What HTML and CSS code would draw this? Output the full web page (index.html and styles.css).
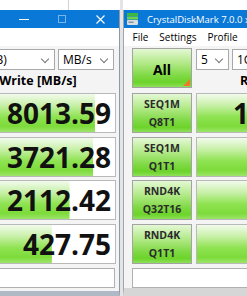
FILE: index.html
```html
<!DOCTYPE html>
<html lang="en">
<head>
    <meta charset="UTF-8">
    <meta name="viewport" content="width=device-width, initial-scale=1.0">
    <title>CrystalDiskMark</title>
    <link rel="stylesheet" href="styles.css">
</head>
<body>
    <div class="desk">
        <!-- left window, mostly off screen -->
        <div class="win win-left">
            <div class="titlebar">
                <span class="title">CrystalDiskMark 7.0.0 x64</span>
                <div class="caption">
                    <span class="cap-btn"><svg width="10" height="10" viewBox="0 0 10 10"><path d="M0 5.5h10" stroke="#fff" stroke-width="1"/></svg></span>
                    <span class="cap-btn dim"><svg width="8" height="8" viewBox="0 0 8 8"><rect x="0.5" y="0.5" width="7" height="7" fill="none" stroke="#fff" stroke-width="1"/></svg></span>
                    <span class="cap-btn"><svg width="9" height="9" viewBox="0 0 9 9"><path d="M0.5 0.5l8 8M8.5 0.5l-8 8" stroke="#fff" stroke-width="1.1"/></svg></span>
                </div>
            </div>
            <div class="menubar">
                <span>File</span><span>Settings</span><span>Profile</span><span>Theme</span><span>Help</span><span>Language</span>
            </div>
            <div class="panel">
                <div class="toprow">
                    <button class="test all">All</button>
                    <div class="ctrl">
                        <div class="selects">
                            <div class="select w-count">5</div>
                            <div class="select w-size">1GiB</div>
                            <div class="select w-drive">C: 2% (119/953GiB)</div>
                            <div class="select w-unit">MB/s</div>
                        </div>
                        <div class="heads"><span>Read [MB/s]</span><span>Write [MB/s]</span></div>
                    </div>
                </div>
                <div class="testrow">
                    <button class="test">SEQ1M<br>Q8T1</button>
                    <div class="meter" style="--fill: 95%">12547.36</div>
                    <div class="meter" style="--fill: 87%">8013.59</div>
                </div>
                <div class="testrow">
                    <button class="test">SEQ1M<br>Q1T1</button>
                    <div class="meter" style="--fill: 90%">7102.64</div>
                    <div class="meter" style="--fill: 86%">3721.28</div>
                </div>
                <div class="testrow">
                    <button class="test">RND4K<br>Q32T16</button>
                    <div class="meter" style="--fill: 72%">2390.17</div>
                    <div class="meter" style="--fill: 70.5%">2112.42</div>
                </div>
                <div class="testrow">
                    <button class="test">RND4K<br>Q1T1</button>
                    <div class="meter" style="--fill: 55%">78.92</div>
                    <div class="meter" style="--fill: 59%">427.75</div>
                </div>
                <div class="comment"></div>
            </div>
        </div>

        <div class="win-gap"></div>

        <!-- right window -->
        <div class="win win-right">
            <div class="titlebar">
                <svg class="app-icon" width="11" height="12" viewBox="0 0 11 12">
                    <rect x="0" y="0" width="11" height="3" fill="#3cb83c"/>
                    <rect x="0" y="3.5" width="11" height="3" fill="#6fd04a"/>
                    <rect x="0" y="7" width="11" height="5" rx="1" fill="#d8dde2"/>
                    <rect x="1.5" y="8.5" width="5" height="1.5" fill="#8a949c"/>
                </svg>
                <span class="title">CrystalDiskMark 7.0.0 x64 [Admin]</span>
            </div>
            <div class="menubar">
                <span>File</span><span>Settings</span><span>Profile</span><span>Theme</span><span>Help</span><span>Language</span>
            </div>
            <div class="panel">
                <div class="toprow">
                    <button class="test all">All</button>
                    <div class="ctrl">
                        <div class="selects">
                            <div class="select w-count">5</div>
                            <div class="select w-size">1GiB</div>
                            <div class="select w-drive">D: 0% (0/1863GiB)</div>
                            <div class="select w-unit">MB/s</div>
                        </div>
                        <div class="heads"><span>Read [MB/s]</span><span>Write [MB/s]</span></div>
                    </div>
                </div>
                <div class="testrow">
                    <button class="test">SEQ1M<br>Q8T1</button>
                    <div class="meter" style="--fill: 96%">14286.51</div>
                    <div class="meter" style="--fill: 88%">9437.02</div>
                </div>
                <div class="testrow">
                    <button class="test">SEQ1M<br>Q1T1</button>
                    <div class="meter" style="--fill: 88%">4685.47</div>
                    <div class="meter" style="--fill: 86%">6210.33</div>
                </div>
                <div class="testrow">
                    <button class="test">RND4K<br>Q32T16</button>
                    <div class="meter" style="--fill: 70%">1276.33</div>
                    <div class="meter" style="--fill: 69%">1189.60</div>
                </div>
                <div class="testrow">
                    <button class="test">RND4K<br>Q1T1</button>
                    <div class="meter" style="--fill: 50%">83.21</div>
                    <div class="meter" style="--fill: 55%">312.48</div>
                </div>
                <div class="comment"></div>
            </div>
        </div>
    </div>
</body>
</html>
```

FILE: styles.css
```css
html, body {
    margin: 0;
    padding: 0;
}
body {
    background: linear-gradient(#cfd3d6, #cfd3d6) no-repeat 68px 0 / 1px 10px, #fff;
    font-family: "Open Sans", "DejaVu Sans", sans-serif;
    color: #000;
    overflow: hidden;
    width: 247px;
    height: 296px;
}
.desk {
    display: flex;
    align-items: flex-start;
    height: 296px;
}
.win {
    flex: none;
    width: 392px;
    margin-top: 10px;
    height: 286px;
    background: #f4f4f4;
    display: flex;
    flex-direction: column;
    box-sizing: border-box;
}
.win-left {
    margin-left: -272px;
    border-right: 1px solid #8c99a6;
    border-bottom: 5px solid #aeb9c5;
}
.win-gap {
    flex: none;
    width: 3px;
    height: 296px;
    background: #e4e4e4;
}
.win-right {
    width: 400px;
    border-left: 1px solid #9da4ab;
    border-bottom: 8px solid #d6d6d6;
}

/* title bar */
.titlebar {
    height: 18px;
    background: #0a78d7;
    color: #fff;
    display: flex;
    align-items: center;
    flex: none;
}
.win-left .titlebar .title {
    visibility: hidden;
}
.title {
    font-size: 9.5px;
    white-space: nowrap;
    padding-left: 9px;
}
.app-icon {
    margin-left: 3px;
    flex: none;
}
.caption {
    display: flex;
    margin-left: auto;
    height: 18px;
}
.cap-btn {
    width: 38px;
    display: flex;
    align-items: center;
    justify-content: center;
}
.cap-btn.dim {
    opacity: 0.45;
}

/* menu */
.menubar {
    height: 18px;
    background: #fff;
    display: flex;
    align-items: center;
    font-size: 10px;
    padding-left: 3px;
    flex: none;
}
.win-left .menubar span {
    visibility: hidden;
}
.menubar span {
    padding: 0 5.5px;
}

/* main panel */
.panel {
    display: flex;
    flex-direction: column;
    padding: 2px 4px 0 8px;
    --read-col: 156px;
}
.win-right .panel {
    --read-col: 162px;
}
.toprow {
    display: grid;
    grid-template-columns: 60px 1fr;
    column-gap: 4px;
    height: 40px;
}
.ctrl {
    display: flex;
    flex-direction: column;
}
.selects {
    display: flex;
    gap: 3px;
    height: 21px;
    margin-top: 1px;
}
.select {
    box-sizing: border-box;
    height: 21px;
    background: #fff;
    border: 1px solid #a9a9a9;
    font-size: 12px;
    line-height: 19px;
    padding-left: 4px;
    white-space: nowrap;
    overflow: hidden;
    position: relative;
}
.select::after {
    content: "";
    position: absolute;
    right: 6px;
    top: 6px;
    width: 5px;
    height: 5px;
    border-right: 1px solid #777;
    border-bottom: 1px solid #777;
    transform: rotate(45deg);
}
.w-count { width: 33px; }
.w-size { width: 57px; }
.w-drive { flex: 1; }
.w-unit { width: 56px; margin-right: 2px; }
.heads {
    display: grid;
    grid-template-columns: var(--read-col) 156px;
    column-gap: 4px;
    margin-top: auto;
}
.heads span {
    text-align: center;
    font-weight: 700;
    font-size: 12.5px;
    line-height: 14px;
    white-space: nowrap;
}

/* test buttons */
.test {
    box-sizing: border-box;
    margin: 0;
    padding: 0;
    border: 1px solid #a3a3a3;
    font-family: inherit;
    font-weight: 700;
    font-size: 10.5px;
    line-height: 18px;
    color: #2b2b2b;
    background: linear-gradient(#e4f8d4 0%, #b5ea8c 35%, #7fd944 70%, #6cd42a 88%, #8ee05a 100%);
}
.test.all {
    position: relative;
    height: 40px;
    font-size: 14px;
    color: #000;
    padding-top: 3px;
}
.test.all::after {
    content: "";
    position: absolute;
    right: 1px;
    bottom: 1px;
    border-left: 7px solid transparent;
    border-bottom: 7px solid #f07a22;
}

/* result rows */
.testrow {
    display: grid;
    grid-template-columns: 60px var(--read-col) 156px;
    column-gap: 4px;
    height: 40px;
    margin-top: 3.5px;
}
.toprow + .testrow {
    margin-top: 5px;
}
.meter {
    box-sizing: border-box;
    border: 1px solid #b9b9b9;
    background: linear-gradient(#f2fbec 0%, #c8f0a8 30%, #8fe352 60%, #7ddb3a 85%, #9de46a 100%) no-repeat 0 0 / var(--fill) 100%, #fff;
    text-align: right;
    font-weight: 700;
    font-size: 28px;
    line-height: 38px;
    padding-right: 4px;
    color: #111;
    white-space: nowrap;
    overflow: hidden;
}
.comment {
    box-sizing: border-box;
    height: 20px;
    margin-top: 4.5px;
    background: #fff;
    border: 1px solid #b0b0b0;
}
```
